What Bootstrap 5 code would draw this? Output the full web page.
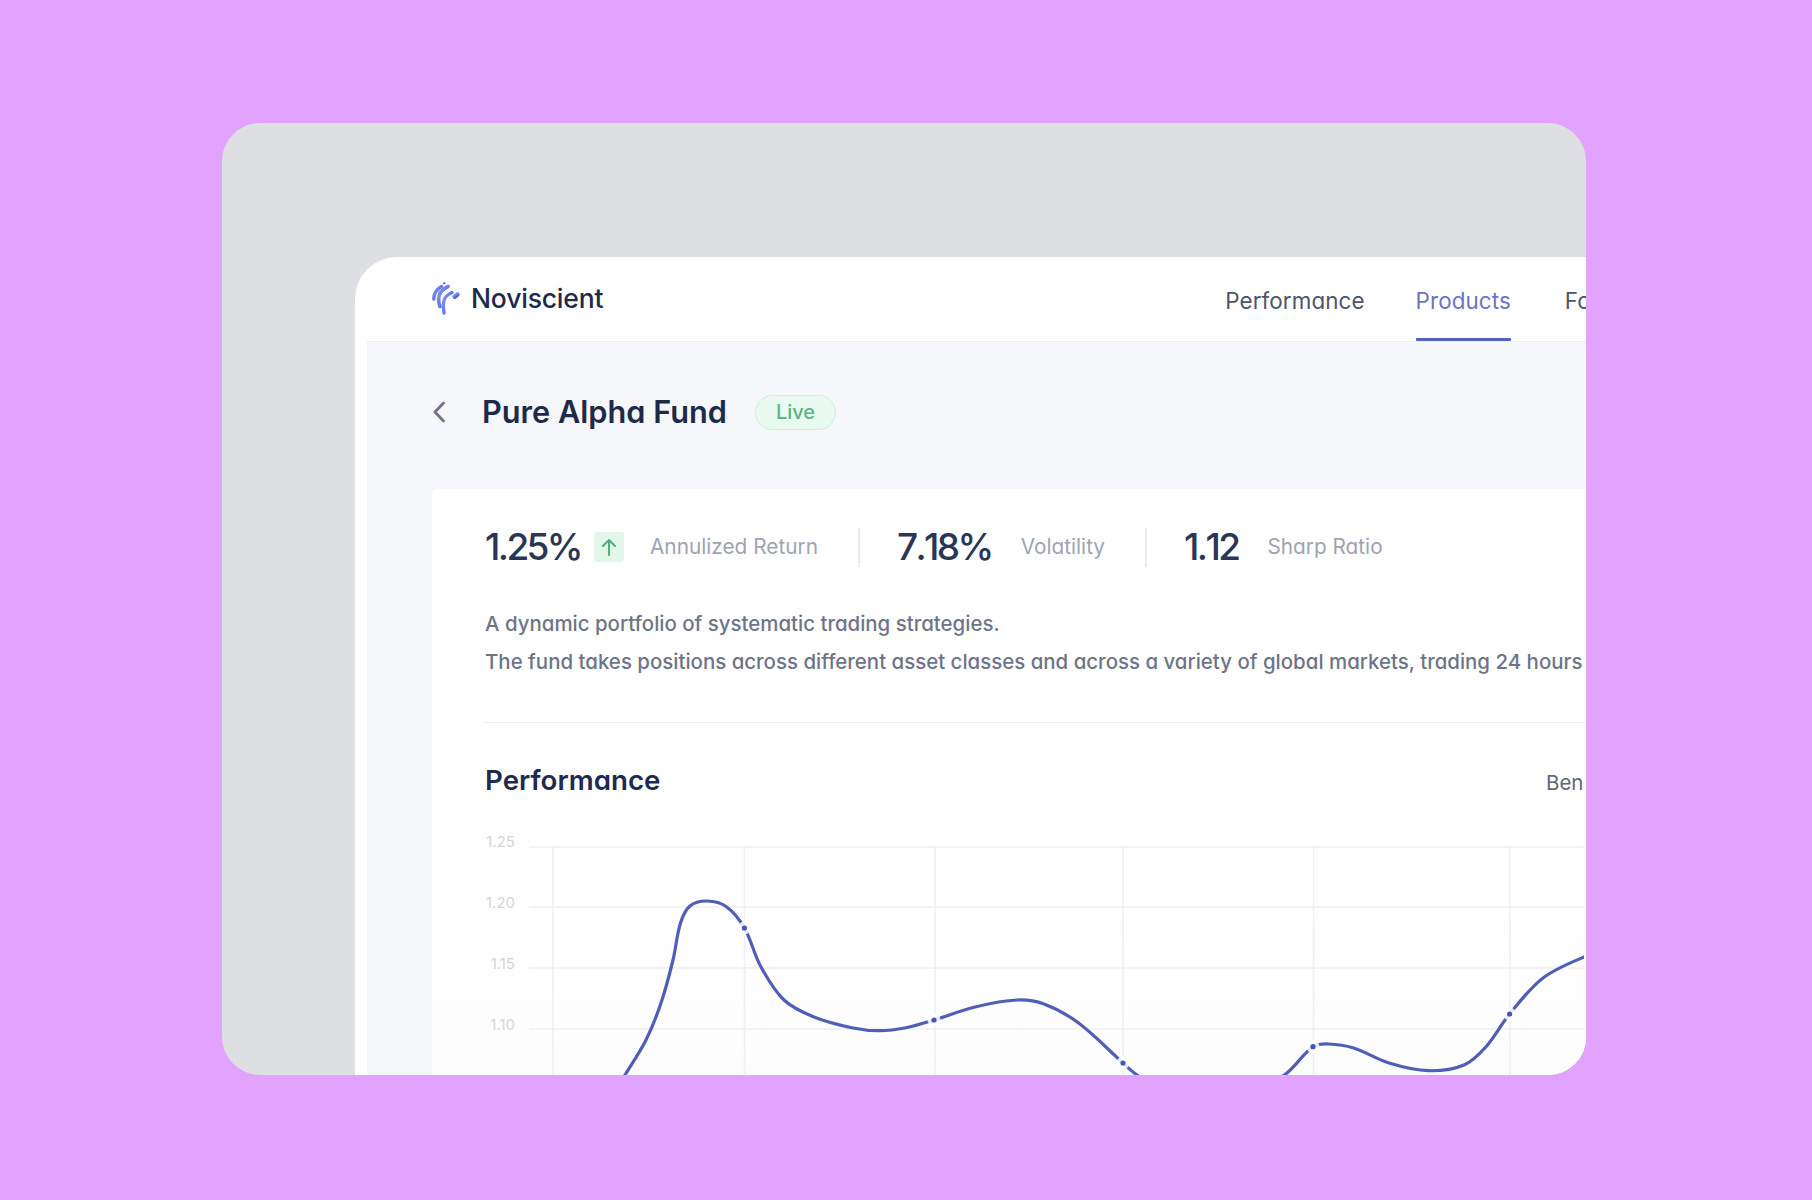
<!DOCTYPE html>
<html lang="en">
<head>
    <meta charset="UTF-8">
    <meta name="viewport" content="width=device-width, initial-scale=1.0">
    <title>Noviscient</title>
    <link href="https://cdn.jsdelivr.net/npm/bootstrap@5.3.0/dist/css/bootstrap.min.css" rel="stylesheet">
    <script src="https://cdn.jsdelivr.net/npm/bootstrap@5.3.0/dist/js/bootstrap.bundle.min.js"></script>
    <style>
        body {
            background-color: #e2a3ff;
            font-family: Inter, "Liberation Sans", sans-serif;
            font-feature-settings: "cv11";
            height: 1200px;
            overflow: hidden;
            padding: 123px 0 0 222px;
        }
        .frame-box {
            width: 1364px;
            height: 952px;
            background-color: #dddfe3;
            border-radius: 38px;
            overflow: hidden;
            padding: 134px 0 0 133px;
        }
        .panel-box {
            width: 1231px;
            height: 818px;
            background-color: #fff;
            border-top-left-radius: 42px;
            overflow: hidden;
        }
        .top-bar { height: 84px; padding-left: 77px; }
        .brand-name { font-size: 26.5px; font-weight: 500; color: #1d2a4a; font-feature-settings: normal; letter-spacing: -0.2px; margin-left: 9px; }
        .top-nav { margin-left: 622px; }
        .top-link { font-size: 22.4px; font-weight: 400; color: #4d5568; text-decoration: none; height: 84px; line-height: 87px; white-space: nowrap; letter-spacing: 0.1px; }
        .top-link.on { color: #6a75c4; border-bottom: 3px solid #5563bb; border-radius: 1px; }
        .nav-slot { margin-left: 51px; }
        .nav-slot.last-slot { margin-left: 54px; }
        .grey-area { margin-left: 12px; background-color: #f6f7fa; box-shadow: inset 0 1px 0 #eff0f3; height: 734px; padding: 0 0 0 65px; }
        .title-row { height: 148px; padding-bottom: 6px; }
        .fund-title { font-size: 30.7px; font-weight: 600; color: #1d2a4a; margin: 0 0 0 36px; }
        .live-pill { font-size: 20px; font-weight: 500; color: #5bb585; background-color: #e9fbf1; border: 1px solid #cdefdc; border-radius: 18px; padding: 0 20px; height: 35px; line-height: 32px; margin-left: 28px; }
        .info-card { width: 1300px; height: 600px; background-color: #fff; border-top-left-radius: 5px; padding: 0 0 0 53px; }
        .stat-row { padding-top: 19px; height: 97px; }
        .stat-num { font-size: 37px; font-weight: 500; color: #2a3654; letter-spacing: -2.6px; line-height: 46px; font-kerning: none; }
        .up-box { width: 30px; height: 30px; background-color: #e2f7ea; border-radius: 3px; margin-left: 13px; }
        .stat-label { font-size: 20.8px; color: #9ea3b3; margin-left: 26px; }
        .stat-label.wide-gap { margin-left: 29px; }
        .stat-label.mid-gap { margin-left: 29px; }
        .stat-sep { width: 2px; height: 39px; background-color: #ebecf0; margin: 0 37px 0 40px; }
        .desc-text { font-size: 20.45px; font-weight: 500; color: #6e7488; line-height: 38px; margin: 0; padding-top: 19px; white-space: nowrap; }
        .hair-line { width: 1100px; height: 1px; background-color: #ececf0; margin-top: 41px; }
        .perf-head { height: 90px; width: 1100px; padding-top: 26px; }
        .perf-title { font-size: 27.7px; font-weight: 600; color: #1f2b4d; margin: 0; }
        .bench-label { font-size: 20.5px; color: #5f6678; margin-left: auto; margin-top: 4px; width: 39px; overflow: hidden; }
        .chart-svg { display: block; margin-left: -53px; }
        .chart-svg text { font-size: 15px; fill: #d4d5dc; font-family: Inter, "Liberation Sans", sans-serif; }
    </style>
</head>

<body>
    <div class="frame-box">
        <div class="panel-box">
            <!-- top bar -->
            <div class="top-bar d-flex align-items-center">
                <svg class="flex-shrink-0" width="30" height="34" viewBox="0 0 30 34">
                    <defs>
                        <linearGradient id="logoGrad" x1="0" y1="0" x2="1" y2="1">
                            <stop offset="0" stop-color="#8a9af4"/>
                            <stop offset="1" stop-color="#3f5be6"/>
                        </linearGradient>
                    </defs>
                    <g fill="none" stroke="url(#logoGrad)" stroke-linecap="round">
                        <path d="M9.5 4.5 C5 7 1.8 11 1.8 17" stroke-width="3.5"/>
                        <path d="M16 4.5 C10.5 7 6.6 11.5 6.6 17 C6.6 20 7.2 22.5 8 24.5" stroke-width="3.6"/>
                        <path d="M20 10.5 C15 12.5 11.6 16.5 11.4 21.5 C11.3 25 11.6 28 12 31" stroke-width="3.3"/>
                        <path d="M12 1.2 L12.4 1.1" stroke-width="2.2"/>
                        <path d="M22.6 14.6 L25.3 12.5" stroke-width="4.6"/>
                    </g>
                </svg>
                <span class="brand-name flex-shrink-0">Noviscient</span>
                <div class="top-nav d-flex flex-shrink-0">
                    <a class="top-link" href="#">Performance</a>
                    <a class="top-link nav-slot on" href="#">Products</a>
                    <a class="top-link nav-slot last-slot" href="#">Fo</a>
                </div>
            </div>

            <div class="grey-area">
                <!-- title -->
                <div class="title-row d-flex align-items-center">
                    <svg width="14" height="22" viewBox="0 0 14 22" fill="none" stroke="#6e7488" stroke-width="2.8" stroke-linecap="round" stroke-linejoin="round"><path d="M11.5 2 L3 11 L11.5 20"/></svg>
                    <h1 class="fund-title">Pure Alpha Fund</h1>
                    <span class="live-pill">Live</span>
                </div>

                <div class="info-card">
                    <!-- stats -->
                    <div class="stat-row d-flex align-items-center">
                        <span class="stat-num">1.25%</span>
                        <span class="up-box d-flex align-items-center justify-content-center">
                            <svg width="18" height="20" viewBox="0 0 18 20" fill="none" stroke="#4bb27a" stroke-width="2" stroke-linecap="round" stroke-linejoin="round"><path d="M9 18 V3 M3 9 L9 3 L15 9"/></svg>
                        </span>
                        <span class="stat-label">Annulized Return</span>
                        <span class="stat-sep"></span>
                        <span class="stat-num">7.18%</span>
                        <span class="stat-label wide-gap">Volatility</span>
                        <span class="stat-sep"></span>
                        <span class="stat-num">1.12</span>
                        <span class="stat-label mid-gap">Sharp Ratio</span>
                    </div>

                    <p class="desc-text">A dynamic portfolio of systematic trading strategies.<br>The fund takes positions across different asset classes and across a variety of global markets, trading 24 hours</p>
                    <div class="hair-line"></div>

                    <div class="perf-head d-flex align-items-center">
                        <h2 class="perf-title">Performance</h2>
                        <span class="bench-label">Ben</span>
                    </div>

                    <!-- chart, viewBox is in screen coordinates -->
                    <svg class="chart-svg" id="chart" width="1152" height="262" viewBox="432 813 1152 262">
                        <defs>
                            <linearGradient id="chartFade" x1="0" y1="0" x2="0" y2="1">
                                <stop offset="0.4" stop-color="#fff"/>
                                <stop offset="1" stop-color="#fcfcfd"/>
                            </linearGradient>
                        </defs>
                        <rect x="432" y="813" width="1152" height="262" fill="url(#chartFade)"/>
                        <g stroke="#f0f0f4" stroke-width="1.5">
                            <path d="M529 847 H1584 M529 907 H1584 M529 968 H1584 M529 1029 H1584"/>
                            <path d="M553 847 V1075 M744.5 847 V1075 M935 847 V1075 M1123 847 V1075 M1313.5 847 V1075 M1510 847 V1075"/>
                        </g>
                        <text x="515" y="847" text-anchor="end">1.25</text>
                        <text x="515" y="908" text-anchor="end">1.20</text>
                        <text x="515" y="969" text-anchor="end">1.15</text>
                        <text x="515" y="1030" text-anchor="end">1.10</text>
                        <path id="curve" fill="none" stroke="#4f5fb8" stroke-width="3.2" stroke-linecap="round"/>
                        <g id="marks"></g>
                    </svg>
                </div>
            </div>
        </div>
    </div>

    <script>
        // points read off the chart, tangents weighted by chord length so it stays smooth
        const pts = [[600,1115],[625,1075],[646,1040],[661,1003],[673,960],[680.5,923],[690,906],[707,901],[726.4,906.7],[744.4,928],[761,967],[784,1000],[814,1017],[853,1028],[879.5,1030.7],[906,1027.7],[934,1020],[975,1007],[1017,1000],[1044,1004],[1078.6,1023],[1123,1063],[1135.7,1074],[1210,1125],[1285.7,1074],[1313,1046.7],[1328.6,1044],[1353.6,1048],[1389,1063],[1428.6,1070.7],[1464,1065],[1486,1046.7],[1509.6,1014],[1543,978],[1584,957],[1620,945]];
        const dist = (a, b) => Math.hypot(a[0] - b[0], a[1] - b[1]);
        const tangent = (i) => {
            const a = pts[i - 1] || pts[i], b = pts[i + 1] || pts[i];
            const len = dist(a, pts[i]) + dist(pts[i], b);
            return [(b[0] - a[0]) / len, (b[1] - a[1]) / len];
        };
        let d = "M" + pts[0].join(" ");
        for (let i = 0; i < pts.length - 1; i++) {
            const p1 = pts[i], p2 = pts[i + 1], h = dist(p1, p2) / 3;
            const t1 = tangent(i), t2 = tangent(i + 1);
            d += ` C${p1[0] + t1[0] * h} ${p1[1] + t1[1] * h} ${p2[0] - t2[0] * h} ${p2[1] - t2[1] * h} ${p2[0]} ${p2[1]}`;
        }
        document.getElementById("curve").setAttribute("d", d);

        let marks = "";
        [[744.4,928],[934,1020],[1123,1063],[1313,1046.7],[1509.6,1014]].forEach(function(m) {
            marks += `<circle cx="${m[0]}" cy="${m[1]}" r="6.5" fill="#fff" fill-opacity="0.85"/><circle cx="${m[0]}" cy="${m[1]}" r="2.6" fill="#4457b5"/>`;
        });
        document.getElementById("marks").innerHTML = marks;
    </script>
</body>
</html>
